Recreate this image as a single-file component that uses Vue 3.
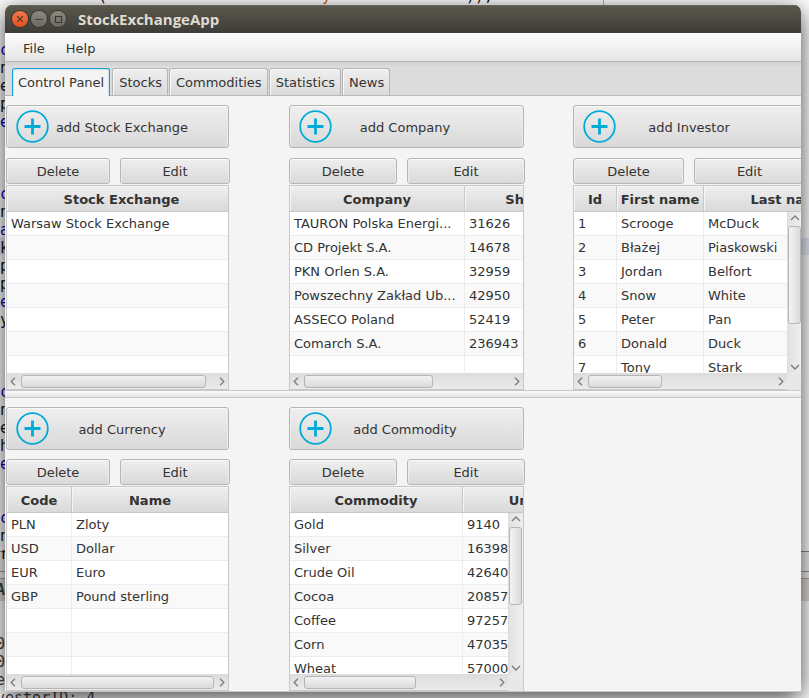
<script setup>
import { ref } from 'vue'

const tabs = ['Control Panel', 'Stocks', 'Commodities', 'Statistics', 'News']
const activeTab = ref('Control Panel')

const upperPanels = [
  {
    kind: 'exchange', label: 'add Stock Exchange', hThumb: 96, vThumb: 0, slots: 7,
    columns: [{ title: 'Stock Exchange', width: 230 }],
    rows: [['Warsaw Stock Exchange']],
  },
  {
    kind: 'company', label: 'add Company', hThumb: 63, vThumb: 0, slots: 7,
    columns: [{ title: 'Company', width: 175 }, { title: 'Shares', width: 132 }],
    rows: [
      ['TAURON Polska Energi...', '31626'],
      ['CD Projekt S.A.', '14678'],
      ['PKN Orlen S.A.', '32959'],
      ['Powszechny Zakład Ub...', '42950'],
      ['ASSECO Poland', '52419'],
      ['Comarch S.A.', '236943'],
    ],
  },
  {
    kind: 'investor', label: 'add Investor', hThumb: 40, vThumb: 74, slots: 7,
    columns: [{ title: 'Id', width: 43 }, { title: 'First name', width: 87 }, { title: 'Last name', width: 170 }],
    rows: [
      ['1', 'Scrooge', 'McDuck'],
      ['2', 'Błażej', 'Piaskowski'],
      ['3', 'Jordan', 'Belfort'],
      ['4', 'Snow', 'White'],
      ['5', 'Peter', 'Pan'],
      ['6', 'Donald', 'Duck'],
      ['7', 'Tony', 'Stark'],
    ],
  },
]

const lowerPanels = [
  {
    kind: 'exchange', label: 'add Currency', hThumb: 100, vThumb: 0, slots: 7,
    columns: [{ title: 'Code', width: 65 }, { title: 'Name', width: 157 }],
    rows: [['PLN', 'Zloty'], ['USD', 'Dollar'], ['EUR', 'Euro'], ['GBP', 'Pound sterling']],
  },
  {
    kind: 'company', label: 'add Commodity', hThumb: 59, vThumb: 59, slots: 7,
    columns: [{ title: 'Commodity', width: 173 }, { title: 'Unit price', width: 164 }],
    rows: [
      ['Gold', '9140'],
      ['Silver', '16398'],
      ['Crude Oil', '42640'],
      ['Cocoa', '20857'],
      ['Coffee', '97257'],
      ['Corn', '47035'],
      ['Wheat', '57000'],
    ],
  },
]

const groups = [
  { name: 'upper', panels: upperPanels },
  { name: 'lower', panels: lowerPanels },
]

const tableWidth = (panel) => panel.columns.reduce((sum, c) => sum + c.width, 0)

// Editor lines lying behind the window: index on the line grid -> text and tone
const behind = {
  2: ['c', 'kw'], 3: ['n', ''], 4: ['e', ''], 5: ['p', ''], 6: ['e', 'kw'],
  10: ['c', 'kw'], 11: ['n', ''], 12: ['a', 'kw'], 13: ['k', ''], 14: ['p', ''], 15: ['p', ''], 16: ['e', 'kw'], 17: ['y', ''],
  21: ['c', 'kw'], 22: ['n', ''], 23: ['e', ''], 24: ['h', ''], 25: ['e', 'kw'],
  28: ['c', 'kw'], 29: ['n', ''], 30: ['r', ''], 32: ['A', 'log strong'],
  35: ['0', 'log'], 36: ['0', 'log'], 37: ['e', 'log'], 38: ['vestorID: 4', 'log'],
}
const codeLines = Array.from({ length: 39 }, (_, i) => behind[i] || ['', ''])
</script>

<template>
  <div class="desktop">
    <div class="backdrop" aria-hidden="true">
      <div class="line first"><span>(</span><span class="str">y</span><span>));</span></div>
      <div v-for="(l, i) in codeLines" :key="i" class="line" :class="l[1]">{{ l[0] }}</div>
      <i class="rule"></i>
      <i class="current"></i>
      <i class="dock"></i>
    </div>

    <main class="window">
      <header class="titlebar">
        <button class="wm close" aria-label="Close">
          <svg viewBox="0 0 16 16"><path d="M5.2 5.2l5.6 5.6M10.8 5.2l-5.6 5.6" /></svg>
        </button>
        <button class="wm" aria-label="Minimize">
          <svg viewBox="0 0 16 16"><path d="M4.5 8.5h7" /></svg>
        </button>
        <button class="wm" aria-label="Maximize">
          <svg viewBox="0 0 16 16"><path d="M5.5 5.5h6v6h-6z" /></svg>
        </button>
        <h1>StockExchangeApp</h1>
      </header>

      <nav class="menubar">
        <button>File</button>
        <button>Help</button>
      </nav>

      <div class="tabs" role="tablist">
        <button
          v-for="t in tabs" :key="t" role="tab" class="tab"
          :class="{ active: t === activeTab }" :aria-selected="t === activeTab"
          @click="activeTab = t"
        >{{ t }}</button>
      </div>

      <section v-for="g in groups" :key="g.name" class="pane" :class="g.name">
        <article v-for="p in g.panels" :key="p.label" class="panel" :class="p.kind">
          <button class="btn add">
            <svg class="plus" viewBox="0 0 33 33">
              <circle cx="16.5" cy="16.5" r="15.3" />
              <path d="M16.5 8.5v16M8.5 16.5h16" />
            </svg>
            <span>{{ p.label }}</span>
          </button>
          <div class="actions">
            <button class="btn">Delete</button>
            <button class="btn">Edit</button>
          </div>
          <div class="grid" :class="{ scrolls: p.vThumb }">
            <div class="view">
              <table :style="{ width: tableWidth(p) + 'px' }">
                <colgroup>
                  <col v-for="c in p.columns" :key="c.title" :style="{ width: c.width + 'px' }">
                </colgroup>
                <thead>
                  <tr><th v-for="c in p.columns" :key="c.title" scope="col">{{ c.title }}</th></tr>
                </thead>
                <tbody>
                  <tr v-for="n in p.slots" :key="n">
                    <td v-for="(c, k) in p.columns" :key="c.title">{{ p.rows[n - 1] ? p.rows[n - 1][k] : '' }}</td>
                  </tr>
                </tbody>
              </table>
            </div>
            <div v-if="p.vThumb" class="bar vertical">
              <svg class="arrow" viewBox="0 0 14 14"><path d="M3 8l4-4 4 4" /></svg>
              <div class="track"><div class="thumb" :style="{ height: p.vThumb + '%' }"></div></div>
              <svg class="arrow" viewBox="0 0 14 14"><path d="M3 6l4 4 4-4" /></svg>
            </div>
            <div class="bar horizontal">
              <svg class="arrow" viewBox="0 0 14 14"><path d="M8 3L4 7l4 4" /></svg>
              <div class="track"><div class="thumb" :style="{ width: p.hThumb + '%' }"></div></div>
              <svg class="arrow" viewBox="0 0 14 14"><path d="M6 3l4 4-4 4" /></svg>
            </div>
          </div>
        </article>
      </section>
    </main>
  </div>
</template>

<style>
body {
  margin: 0;
  background: #fff;
}
</style>

<style scoped>
.desktop {
  position: relative;
  box-sizing: border-box;
  display: flex;
  min-height: 100vh;
  padding: 5px 8px 6px 5px;
  overflow: hidden;
  font: 13px/16px "DejaVu Sans", sans-serif;
  color: #333;
}

button {
  font: inherit;
  color: inherit;
  margin: 0;
}

/* editor behind the window */
.backdrop {
  position: absolute;
  inset: 0;
  overflow: hidden;
  font: 15px/18px "DejaVu Sans Mono", monospace;
  color: #111;
}
.line {
  height: 18px;
  white-space: pre;
}
.first {
  display: flex;
  margin: -13px 0 0 98px;
}
.first span {
  width: 144px;
}
.first .str {
  margin-left: 80px;
  color: #c60;
}
.kw {
  color: #00b;
}
.log {
  margin-left: -4px;
  color: #444;
}
.strong {
  font-weight: bold;
}
.rule {
  position: absolute;
  top: 0;
  left: 603px;
  width: 1px;
  height: 8px;
  background: #f99;
}
.current {
  position: absolute;
  top: 238px;
  left: 0;
  right: 0;
  height: 17px;
  background: #e8ecfa;
  z-index: -1;
}
.dock {
  position: absolute;
  top: 551px;
  left: 0;
  right: 0;
  height: 50px;
  box-sizing: border-box;
  border-top: 1px solid #888;
  background: linear-gradient(#f2f1ef 19px, #999 19px, #999 20px, #f2f1ef 20px, #f2f1ef 26px, #aaa 26px, #aaa 27px, #dedad6 27px);
  z-index: -1;
}

/* window */
.window {
  position: relative;
  display: flex;
  flex-direction: column;
  flex: 1;
  min-width: 0;
  box-sizing: border-box;
  overflow: hidden;
  border-bottom: 1px solid #c8c8c8;
  border-radius: 7px 7px 0 0;
  background: #f4f4f4;
  box-shadow: 0 6px 24px rgba(0, 0, 0, 0.75);
}
.titlebar {
  display: flex;
  align-items: center;
  gap: 3px;
  height: 28px;
  padding-left: 7px;
  box-sizing: border-box;
  background: linear-gradient(#5b584c, #3d3c38);
  box-shadow: inset 0 1px #68665a;
}
.titlebar h1 {
  margin: 0 0 0 9px;
  font: bold 15px/20px "Open Sans", sans-serif;
  color: #dfdbd2;
}
.wm {
  width: 16px;
  height: 16px;
  padding: 0;
  border: 0;
  border-radius: 50%;
  background: linear-gradient(#8b8980, #6a6860);
  box-shadow: 0 0 0 1px #35342f;
}
.wm.close {
  background: linear-gradient(#f4764e, #e2521f);
}
.wm svg {
  display: block;
  fill: none;
  stroke: #3b3a35;
  stroke-width: 1.2;
}
.menubar {
  display: flex;
  gap: 5px;
  height: 29px;
  padding-left: 10px;
  box-sizing: border-box;
  border-bottom: 1px solid #b5b5b5;
  background: linear-gradient(#fdfdfd, #e5e5e5);
}
.menubar button {
  padding: 4px 8px 0;
  border: 0;
  background: none;
}
.tabs {
  display: flex;
  align-items: flex-end;
  gap: 1px;
  height: 34px;
  padding: 6px 6px 0;
  box-sizing: border-box;
  border-bottom: 1px solid #bababa;
  background: linear-gradient(#cfcfcf, #dcdcdc 5px);
}
.tab {
  height: 27px;
  padding: 2px 5px 0 6px;
  border: 1px solid #b5b5b5;
  border-bottom: 0;
  border-radius: 3px 3px 0 0;
  background: linear-gradient(#efefef, #dadada);
  box-shadow: inset 1px 1px #f8f8f8;
  white-space: nowrap;
}
.tab.active {
  height: 28px;
  margin: 0 1px -1px 1px;
  padding: 1px 5px 1px;
  border-color: #1ba1cf;
  background: #f4f4f4;
  box-shadow: inset 1px 1px #c9e8f3, inset -1px 0 #c9e8f3;
}

/* split panes */
.pane {
  display: grid;
  grid-template-columns: minmax(283px, 1fr) minmax(284px, 1fr) minmax(284px, 1fr);
  align-items: start;
  padding: 9px 0 0 1px;
}
.lower {
  flex: 1;
}
.upper::after {
  content: "";
  grid-column: 1 / -1;
  height: 8px;
  margin-left: -1px;
  box-sizing: border-box;
  border: solid #c8c8c8;
  border-width: 1px 0;
  background: linear-gradient(#fafafa, #e4e4e4);
}
.panel {
  display: flex;
  flex-direction: column;
}
.exchange {
  width: 223px;
}
.company {
  width: 235px;
}
.investor {
  width: 231px;
}
.btn {
  box-sizing: border-box;
  border: 1px solid #b5b5b5;
  border-radius: 3px;
  background: linear-gradient(#efefef, #d9d9d9);
  box-shadow: inset 0 1px #fafafa, inset 1px 0 #ededed, inset -1px 0 #ededed;
}
.add {
  display: flex;
  align-items: center;
  gap: 5px;
  height: 43px;
  padding: 0 0 0 9px;
}
.add span {
  width: 136px;
  padding-top: 2px;
  white-space: nowrap;
  text-align: center;
}
.plus {
  flex: none;
  width: 33px;
  height: 33px;
  fill: none;
  stroke: #00abd8;
  stroke-width: 1.8;
}
.plus path {
  stroke-width: 2.8;
}
.actions {
  display: grid;
  gap: 10px;
  margin: 10px -1px 1px 0;
}
.lower .actions {
  margin-top: 9px;
}
.exchange .actions {
  grid-template-columns: 104fr 110fr;
}
.company .actions {
  grid-template-columns: 108fr 118fr;
}
.investor .actions {
  grid-template-columns: 1fr 1fr;
}
.actions .btn {
  height: 26px;
  padding: 2px 0 0;
}

/* data grid */
.grid {
  display: grid;
  grid-template: 26px 161px 17px / minmax(0, 1fr);
  box-sizing: border-box;
  border: 1px solid #c8c8c8;
  border-bottom: 0;
  background: #e8e8e8;
}
.investor .grid {
  width: 230px;
}
.scrolls {
  grid-template-columns: minmax(0, 1fr) 15px;
}
.view {
  grid-area: 1 / 1 / 3 / -1;
  overflow: hidden;
  background: #fff;
}
table {
  table-layout: fixed;
  border-collapse: separate;
  border-spacing: 0;
}
th,
td {
  box-sizing: border-box;
  overflow: hidden;
  white-space: nowrap;
}
th {
  height: 26px;
  padding: 2px 0 0;
  border-right: 1px solid #c8c8c8;
  border-bottom: 1px solid #c8c8c8;
  background: linear-gradient(#efefef, #d9d9d9);
  box-shadow: inset 1px 1px #f6f6f6;
}
td {
  height: 24px;
  padding: 0 4px;
  border-right: 1px solid #ededed;
  border-bottom: 1px solid #ededed;
  text-overflow: ellipsis;
}
tbody tr:nth-child(even) {
  background: #f9f9f9;
}
.bar {
  display: flex;
  box-sizing: border-box;
}
.horizontal {
  grid-area: 3 / 1;
  padding: 2px 0 1px;
  border-bottom: 1px solid #c8c8c8;
  background: linear-gradient(#dcdcdc, #ebebeb);
}
.vertical {
  grid-area: 2 / 2;
  flex-direction: column;
  padding: 0 1px 0 0;
  border-left: 1px solid #dcdcdc;
  background: linear-gradient(90deg, #e2e2e2, #efefef);
  z-index: 1;
}
.track {
  flex: 1;
  min-width: 0;
  min-height: 0;
}
.thumb {
  box-sizing: border-box;
  border: 1px solid #b5b5b5;
  border-radius: 3px;
  background: linear-gradient(#f2f2f2, #dadada);
}
.horizontal .thumb {
  height: 13px;
}
.vertical .thumb {
  width: 13px;
  background: linear-gradient(90deg, #f4f4f4, #dadada);
}
.arrow {
  flex: none;
  width: 14px;
  height: 14px;
  fill: none;
  stroke: #7d7d7d;
  stroke-width: 1.4;
}
.horizontal .arrow {
  height: 13px;
}
</style>
